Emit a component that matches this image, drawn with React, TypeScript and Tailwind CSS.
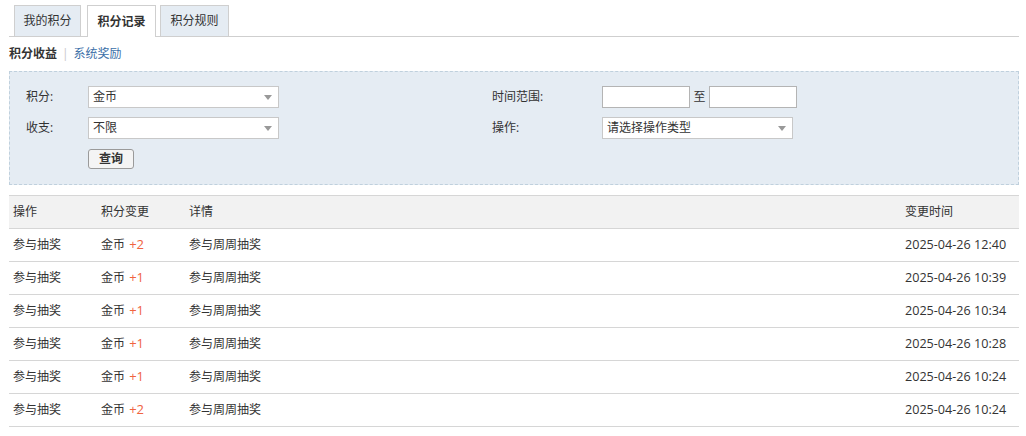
const rows = [
  { op: "参与抽奖", delta: "+2", detail: "参与周周抽奖", time: "2025-04-26 12:40" },
  { op: "参与抽奖", delta: "+1", detail: "参与周周抽奖", time: "2025-04-26 10:39" },
  { op: "参与抽奖", delta: "+1", detail: "参与周周抽奖", time: "2025-04-26 10:34" },
  { op: "参与抽奖", delta: "+1", detail: "参与周周抽奖", time: "2025-04-26 10:28" },
  { op: "参与抽奖", delta: "+1", detail: "参与周周抽奖", time: "2025-04-26 10:24" },
  { op: "参与抽奖", delta: "+2", detail: "参与周周抽奖", time: "2025-04-26 10:24" },
];

function Select({ value, width }: { value: string; width: string }) {
  return (
    <div
      className={`${width} h-[22px] bg-white border border-[#c8c8c8] flex items-center justify-between pl-[4px] pr-[6px]`}
    >
      <span>{value}</span>
      <svg width="8" height="5" viewBox="0 0 8 5">
        <path d="M0 0h8L4 5z" fill="#999" />
      </svg>
    </div>
  );
}

export default function App() {
  return (
    <div
      className="w-[1026px] h-[436px] bg-white text-[12px] text-[#333] overflow-hidden"
      style={{ fontFamily: '"Open Sans", "Noto Sans CJK SC", sans-serif' }}
    >
      <div className="ml-[9px] w-[1010px]">
        {/* tabs */}
        <div className="h-[37px] flex items-end pl-[5px] border-b border-[#cfcfcf]">
          <div className="h-[31px] w-[67px] flex items-center justify-center bg-[#e5ecf3] border border-[#cfcfcf] border-b-0">
            我的积分
          </div>
          <div className="h-[32px] mb-[-1px] w-[69px] ml-[6px] flex items-center justify-center bg-white border border-[#cfcfcf] border-b-0 font-bold">
            积分记录
          </div>
          <div className="h-[31px] w-[69px] ml-[4px] flex items-center justify-center bg-[#e5ecf3] border border-[#cfcfcf] border-b-0">
            积分规则
          </div>
        </div>

        {/* sub nav */}
        <div className="h-[34px] flex items-center">
          <span className="font-bold">积分收益</span>
          <span className="ml-[5px] mr-[5px] text-[#c8c8c8]">|</span>
          <a className="text-[#3b6fa8]">系统奖励</a>
        </div>

        {/* filter panel */}
        <div className="bg-[#e5ecf3] border border-dashed border-[#bfd0dd] pt-[14px] pb-[15px] pl-[16px] flex">
          <div className="w-[466px] flex flex-col">
            <div className="flex items-center h-[22px]">
              <span className="w-[62px]">积分:</span>
              <Select value="金币" width="w-[191px]" />
            </div>
            <div className="flex items-center h-[22px] mt-[9px]">
              <span className="w-[62px]">收支:</span>
              <Select value="不限" width="w-[191px]" />
            </div>
            <div className="flex items-center mt-[10px]">
              <span className="w-[62px]" />
              <button className="h-[20px] w-[46px] border border-[#9a9a9a] rounded-[3px] bg-[#f4f4f4] font-bold flex items-center justify-center">
                查询
              </button>
            </div>
          </div>
          <div className="flex flex-col">
            <div className="flex items-center h-[22px]">
              <span className="w-[110px]">时间范围:</span>
              <div className="w-[88px] h-[22px] bg-white border border-[#b4b4b4]" />
              <span className="w-[19px] text-center">至</span>
              <div className="w-[88px] h-[22px] bg-white border border-[#b4b4b4]" />
            </div>
            <div className="flex items-center h-[22px] mt-[9px]">
              <span className="w-[110px]">操作:</span>
              <Select value="请选择操作类型" width="w-[191px]" />
            </div>
          </div>
        </div>

        {/* table */}
        <div className="mt-[10px] border-t border-[#d6d6d6]">
          <div className="h-[33px] bg-[#f2f2f2] flex items-center border-b border-[#d6d6d6]">
            <span className="w-[88px] pl-[4px]">操作</span>
            <span className="w-[88px] pl-[4px]">积分变更</span>
            <span className="flex-1 pl-[4px]">详情</span>
            <span className="w-[118px] pl-[4px]">变更时间</span>
          </div>
          {rows.map((r, i) => (
            <div key={i} className="h-[33px] flex items-center border-b border-[#d6d6d6]">
              <span className="w-[88px] pl-[4px]">{r.op}</span>
              <span className="w-[88px] pl-[4px]">
                金币 <span className="text-[#f0643f] text-[13px] ml-[1px]">{r.delta}</span>
              </span>
              <span className="flex-1 pl-[4px]">{r.detail}</span>
              <span className="w-[118px] pl-[4px] text-[12.6px]">{r.time}</span>
            </div>
          ))}
        </div>
      </div>
    </div>
  );
}
